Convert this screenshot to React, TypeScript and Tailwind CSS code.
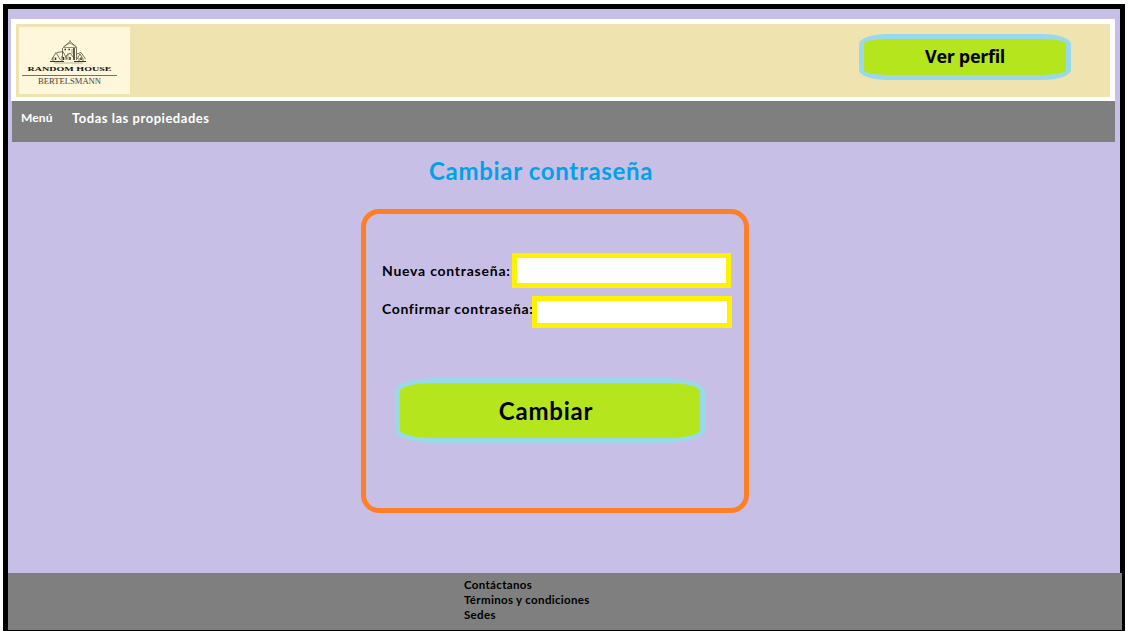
import React from "react";

function HouseLogo() {
  return (
    <div className="flex h-[67px] w-[111px] flex-col bg-[#fff7dc]">
      <svg className="ml-[31px] mt-[13px] h-6 w-[37px] shrink-0" viewBox="0 0 37 24" fill="none" stroke="#77715f" strokeWidth="0.8">
        <path d="M12.5 8V18M13 7.5L20 1.5L27 7.5M26.5 8V20" stroke="#55503f" />
        <path d="M13 7.5H27M14 6.5L20 3L26 6.5M20 0V2" />
        <path d="M24 8V20" stroke="#292721" strokeWidth="1.5" />
        <path d="M22 9V14M18 13V20" strokeWidth="0.7" />
        <path d="M14.5 9.5H16M18.5 9.5H20" stroke="#292721" strokeWidth="1.6" />
        <path d="M1.5 20L6 12.5L10.5 20M3 17V21M7 12.5L13 11.5L17 19M12 16V21" stroke="#55503f" />
        <path d="M16 20V16L20 13L24 18M27 14L31 12.5L35.5 19M27 19L30 14L33 19V21M29 18V21" stroke="#55503f" />
        <path d="M5.5 17.5V20M13.5 17V20M20 17V20M31 17.5V20" stroke="#383429" strokeWidth="1.5" />
        <path d="M0 21.5H14M24 21.5H36" stroke="#383429" strokeWidth="1" />
        <path d="M4 23H33" stroke="#a59d83" strokeWidth="0.8" />
      </svg>
      <svg className="h-[30px] w-[111px] shrink-0" viewBox="0 0 111 30">
        <text x="8.5" y="7.2" textLength="84" lengthAdjust="spacingAndGlyphs" fill="#161510" fontFamily="Liberation Serif, serif" fontSize="6.9" fontWeight="700">RANDOM HOUSE</text>
        <path d="M3 11.5H98" stroke="#77705f" strokeWidth="1" />
        <text x="19" y="19.8" textLength="63" lengthAdjust="spacingAndGlyphs" fill="#45413a" fontFamily="Liberation Serif, serif" fontSize="7.5" fontWeight="400">BERTELSMANN</text>
      </svg>
    </div>
  );
}

export default function App() {
  return (
    <div className="h-[635px] w-[1128px] overflow-hidden bg-white pl-[3px] pt-1 font-['Lato',sans-serif] font-bold text-black">
      <div className="flex h-[627px] w-[1122px] flex-col border-x-[5px] border-b border-t-[5px] border-black bg-[#c8bfe7]">
        <header className="ml-[3px] mt-[10px] flex h-[82px] w-[1104px] shrink-0 items-start justify-between border-[5px] border-b-4 border-white bg-[#efe4b0] pl-[3px] pr-[39px] font-normal">
          <div className="mt-[3px]"><HouseLogo /></div>
          <button className="mt-[10px] h-[46px] w-[212px] rounded-[28px/10px] border-[5px] border-[#99d9ea] bg-[#b5e61d] pb-[2px] font-['Open_Sans',sans-serif] text-[18px] font-bold leading-none tracking-[-0.35px]">
            Ver perfil
          </button>
        </header>
        <nav className="ml-1 flex h-[41px] w-[1103px] shrink-0 items-start bg-[#7f7f7f] pl-[9px] pt-[9px] leading-4 text-white">
          <a className="w-[51px] text-[12px] tracking-[0.1px]">Menú</a>
          <a className="whitespace-nowrap text-[13px] tracking-[0.53px]">Todas las propiedades</a>
        </nav>
        <main className="flex h-[431px] shrink-0 flex-col">
          <h1 className="ml-[421px] mt-[13px] h-8 whitespace-nowrap text-[24px] leading-8 tracking-[0.68px] text-[#00a2e8]">Cambiar contraseña</h1>
          <form className="ml-[353px] mt-[22px] h-[304px] w-[388px] rounded-[18px] border-[5px] border-[#ff7f27] pl-4 pt-[39px] text-[14px] leading-4">
            <div className="flex h-[35px]">
              <label className="w-[130px] whitespace-nowrap pt-[10px] tracking-[0.76px]">Nueva contraseña:</label>
              <input type="password" aria-label="Nueva contraseña" className="h-[35px] w-[219px] border-[5px] border-[#fff200] bg-white" />
            </div>
            <div className="mt-2 flex h-8">
              <label className="w-[150px] overflow-hidden whitespace-nowrap pt-[5px] tracking-[0.64px]">Confirmar contraseña:</label>
              <input type="password" aria-label="Confirmar contraseña" className="h-8 w-[200px] border-[5px] border-[#fff200] bg-white" />
            </div>
            <button type="button" className="ml-[13px] mt-[50px] h-[65px] w-[310px] rounded-[40px/13px] border-[5px] border-[#99d9ea] bg-[#b5e61d] pr-[8px] text-[24px] leading-none tracking-[0.75px]">
              Cambiar
            </button>
          </form>
        </main>
        <footer className="h-[57px] w-[1114px] shrink-0 bg-[#7f7f7f] pl-[456px] pt-1 text-[11.5px] leading-[15px] tracking-[0.33px]">
          <p>Contáctanos</p>
          <p>Términos y condiciones</p>
          <p>Sedes</p>
        </footer>
      </div>
    </div>
  );
}
